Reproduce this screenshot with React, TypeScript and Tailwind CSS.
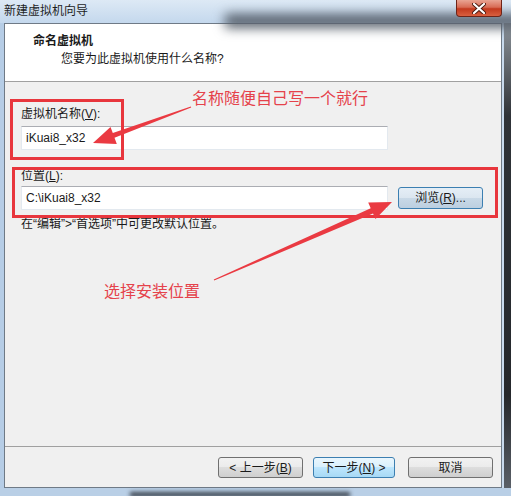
import React from "react";

type Pt = [number, number];

// tapering annotation arrow: thin at the tail, solid head at the tip
function arrowPoints(tail: Pt, tip: Pt, head: number, headW: number, neckW: number, tailW: number) {
  const dx = tip[0] - tail[0];
  const dy = tip[1] - tail[1];
  const len = Math.hypot(dx, dy);
  const ux = dx / len;
  const uy = dy / len;
  const nx = -uy;
  const ny = ux;
  const bx = tip[0] - ux * head;
  const by = tip[1] - uy * head;
  const p = (x: number, y: number) => `${x.toFixed(1)},${y.toFixed(1)}`;
  return [
    p(tail[0] + nx * tailW, tail[1] + ny * tailW),
    p(bx + nx * neckW, by + ny * neckW),
    p(bx + nx * headW, by + ny * headW),
    p(tip[0], tip[1]),
    p(bx - nx * headW, by - ny * headW),
    p(bx - nx * neckW, by - ny * neckW),
    p(tail[0] - nx * tailW, tail[1] - ny * tailW),
  ].join(" ");
}

function Button(props: { children: React.ReactNode; primary?: boolean; width: string }) {
  return (
    <button
      className={`${props.width} h-[21px] rounded-[3px] border text-[12px] leading-[16px] text-[#1a1a1a] ${
        props.primary
          ? "border-[#3c7fb1] bg-[linear-gradient(#eaf6fd_0%,#d9f0fc_50%,#bee6fd_50%,#a7d9f5_100%)]"
          : "border-[#707070] bg-[linear-gradient(#f2f2f2_0%,#ebebeb_50%,#dddddd_50%,#cfcfcf_100%)]"
      }`}
    >
      {props.children}
    </button>
  );
}

function TextBox(props: { value: string }) {
  return (
    <div className="w-[367px] h-[24px] flex items-center px-[4px] bg-white border border-[#e3e9ef] border-t-[#abadb3] text-[12px] text-[#1a1a1a]">
      {props.value}
    </div>
  );
}

export default function App() {
  return (
    <div className="relative w-[511px] h-[496px] overflow-hidden bg-[linear-gradient(90deg,#b6cde6,#c3d7ec_50%,#aac2dd)] font-['Liberation_Sans','Noto_Sans_CJK_SC',sans-serif] text-[#1a1a1a]">
      {/* Title bar */}
      <div className="relative h-[23px] flex items-start justify-between bg-[linear-gradient(#dde9f5,#c4d8ed)]">
        <div className="absolute left-[225px] top-[14px] w-[300px] h-[14px] bg-[#57606b] blur-[6px]" />
        <span className="relative pl-[4px] pt-[3px] text-[12px] leading-[16px] text-[#1e1e1e]">新建虚拟机向导</span>
        <div className="relative mr-[9px] w-[46px] h-[17px] flex items-center justify-center rounded-b-[4px] border border-t-0 border-[#6e2418] bg-[linear-gradient(#e9a493_0%,#d86c55_45%,#c3391e_55%,#d9603f_100%)]">
          <svg width="14" height="11" viewBox="0 0 14 11">
            <path d="M2 1 L12 10 M12 1 L2 10" stroke="#4a1a10" strokeWidth="4" strokeLinecap="round" />
            <path d="M2 1 L12 10 M12 1 L2 10" stroke="#ffffff" strokeWidth="2.2" strokeLinecap="round" />
          </svg>
        </div>
      </div>

      <div className="flex">
        {/* Client area */}
        <div className="ml-[4px] w-[498px] h-[465px] flex flex-col border border-[#6f7a86] bg-[#f0f0f0]">
          {/* Header */}
          <div className="h-[58px] bg-white border-b border-[#a0a0a0] pt-[9px]">
            <div className="pl-[28px] text-[12px] leading-[16px] font-bold">命名虚拟机</div>
            <div className="pl-[56px] mt-[2px] text-[12px] leading-[16px]">您要为此虚拟机使用什么名称?</div>
          </div>

          {/* Body */}
          <div className="flex-1 pl-[16px] pt-[24px] text-[12px] leading-[16px]">
            <div>
              虚拟机名称(<u>V</u>):
            </div>
            <div className="mt-[4px]">
              <TextBox value="iKuai8_x32" />
            </div>
            <div className="mt-[18px]">
              位置(<u>L</u>):
            </div>
            <div className="mt-[2px] flex items-center gap-[10px]">
              <TextBox value="C:\iKuai8_x32" />
              <button className="w-[85px] h-[22px] rounded-[3px] border border-[#3c7fb1] bg-[linear-gradient(#e5eef6_0%,#dbe6f0_50%,#c9d9e7_50%,#bccfe0_100%)] text-[12px] leading-[16px]">
                浏览(<u>R</u>)...
              </button>
            </div>
            <div className="mt-[6px]">在“编辑”&gt;“首选项”中可更改默认位置。</div>
          </div>

          {/* Footer */}
          <div className="h-[41px] border-t border-[#a0a0a0] pt-[10px] pr-[8px] flex justify-end items-start">
            <Button width="w-[85px]">
              &lt; 上一步(<u>B</u>)
            </Button>
            <div className="w-[10px]" />
            <Button width="w-[82px]" primary>
              下一步(<u>N</u>) &gt;
            </Button>
            <div className="w-[13px]" />
            <Button width="w-[85px]">取消</Button>
          </div>
        </div>

        {/* Right frame */}
        <div className="w-[2px] bg-[#c9dbee]" />
        <div className="w-[7px] h-[465px] bg-[linear-gradient(#8d949b,#2f3338_20%,#25282c_80%,#5a6068)]" />
      </div>

      {/* Bottom frame */}
      <div className="relative h-[8px] bg-[#b9cfe6]">
        <div className="absolute left-[130px] top-[4px] w-[220px] h-[5px] bg-[#3e4650] blur-[2px]" />
      </div>

      {/* Annotations */}
      <div className="absolute left-[10px] top-[99px] w-[114px] h-[61px] border-[3px] border-[#e8363d]" />
      <div className="absolute left-[12px] top-[167px] w-[486px] h-[51px] border-[3px] border-[#e8363d]" />
      <div className="absolute left-[192px] top-[90px] text-[16px] leading-[18px] text-[#e5424b] whitespace-nowrap">
        名称随便自己写一个就行
      </div>
      <div className="absolute left-[104px] top-[283px] text-[16px] leading-[18px] text-[#e5424b] whitespace-nowrap">
        选择安装位置
      </div>
      <svg className="absolute left-0 top-0" width="511" height="496">
        <polygon points={arrowPoints([191, 107], [93, 143], 22, 9, 2.5, 0.6)} fill="#ea3a42" />
        <polygon points={arrowPoints([214, 280], [392, 202], 22, 9, 2.8, 0.6)} fill="#ea3a42" />
      </svg>
    </div>
  );
}
